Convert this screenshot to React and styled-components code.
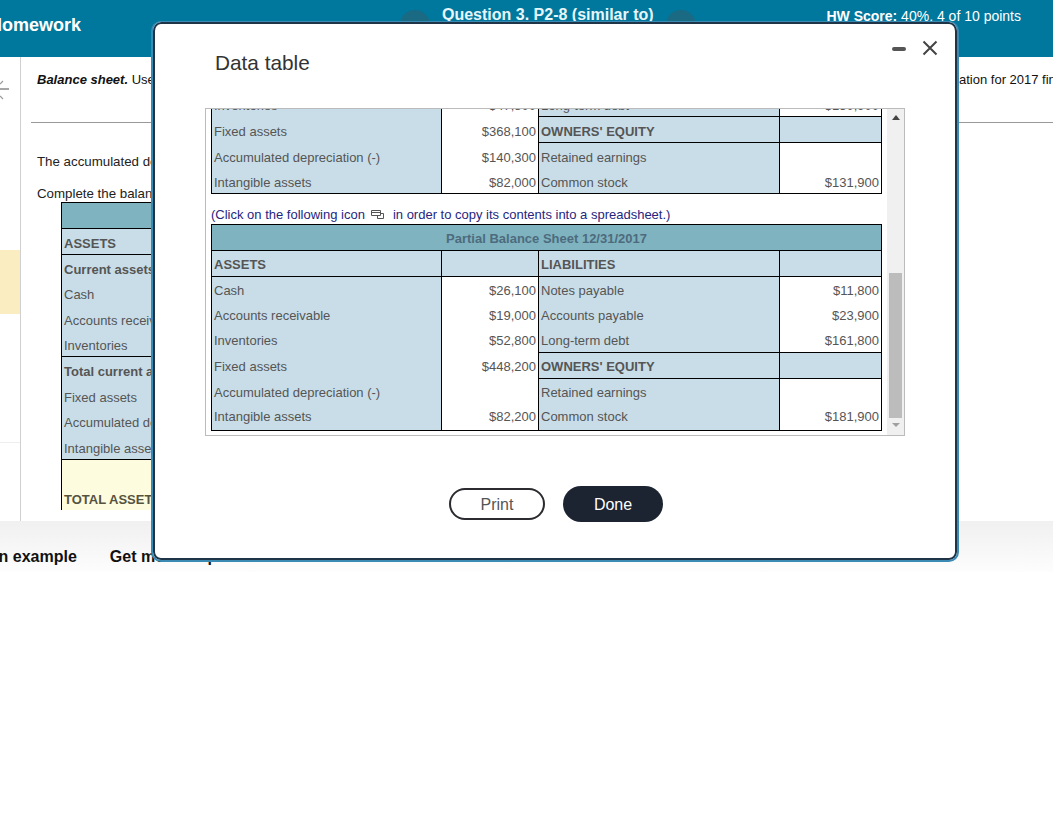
import React from "react";
import styled, { createGlobalStyle } from "styled-components";

const balance2016 = [
  { left: "Fixed assets", amount: "$368,100", right: "OWNERS' EQUITY", value: "", equity: true, h: 26 },
  { left: "Accumulated depreciation (-)", amount: "$140,300", right: "Retained earnings", value: "", h: 25 },
  { left: "Intangible assets", amount: "$82,000", right: "Common stock", value: "$131,900", h: 26 },
];

const balance2017 = [
  { left: "Cash", amount: "$26,100", right: "Notes payable", value: "$11,800", h: 25 },
  { left: "Accounts receivable", amount: "$19,000", right: "Accounts payable", value: "$23,900", h: 25 },
  { left: "Inventories", amount: "$52,800", right: "Long-term debt", value: "$161,800", h: 26 },
  { left: "Fixed assets", amount: "$448,200", right: "OWNERS' EQUITY", value: "", equity: true, h: 26 },
  { left: "Accumulated depreciation (-)", amount: "", right: "Retained earnings", value: "", h: 25 },
  { left: "Intangible assets", amount: "$82,200", right: "Common stock", value: "$181,900", h: 27 },
];

const worksheet = [
  { label: "ASSETS", bold: true, ruled: true, h: 26 },
  { label: "Current assets", bold: true, h: 25 },
  { label: "Cash", h: 26 },
  { label: "Accounts receivable", h: 25 },
  { label: "Inventories", ruled: true, h: 26 },
  { label: "Total current assets", bold: true, h: 26 },
  { label: "Fixed assets", h: 25 },
  { label: "Accumulated depreciation (-)", h: 26 },
  { label: "Intangible assets", ruled: true, h: 26 },
];

export default function App() {
  return (
    <Page>
      <GlobalStyle />
      <Header>
        <Brand>Homework</Brand>
        <QuestionNav>
          <NavCircle />
          <QuestionTitle>Question 3. P2-8 (similar to)</QuestionTitle>
          <NavCircle />
        </QuestionNav>
        <Score>
          <b>HW Score:</b> 40%, 4 of 10 points
        </Score>
      </Header>

      <Body>
        <Sidebar>
          <CollapseIcon width="9" height="22" viewBox="0 0 9 22">
            <path d="M0 10h9" stroke="#888" strokeWidth="1.5" />
            <path d="M3 2 0 5M3 20l-3-3" stroke="#999" strokeWidth="1.2" fill="none" />
          </CollapseIcon>
          <SideHighlight />
          <SideRule />
        </Sidebar>
        <Main>
          <Statement>
            <span>
              <i>Balance sheet.</i> Use the data table
            </span>
            <StatementEnd>ation for 2017 financial</StatementEnd>
          </Statement>
          <Rule />
          <Paragraph $top={31}>The accumulated depreciation for 2017</Paragraph>
          <Paragraph $top={16}>Complete the balance sheet</Paragraph>
          <WorksheetTable>
            <tbody>
              <tr>
                <HeadCell style={{ height: 26 }} />
              </tr>
              {worksheet.map((row) => (
                <tr key={row.label}>
                  <Cell $fill="blue" $bold={row.bold} $ruled={row.ruled} style={{ height: row.h }}>
                    {row.label}
                  </Cell>
                </tr>
              ))}
              <tr>
                <TotalCell>TOTAL ASSETS</TotalCell>
              </tr>
            </tbody>
          </WorksheetTable>
        </Main>
      </Body>

      <Footer>
        <FooterLink $offset={-51}>View an example</FooterLink>
        <FooterLink>Get more help</FooterLink>
      </Footer>

      <Modal>
        <ModalHeader>
          <ModalTitle>Data table</ModalTitle>
          <MinimizeBar />
          <CloseIcon width="16" height="16" viewBox="0 0 16 16">
            <path d="M1.5 1.5l13 13M14.5 1.5l-13 13" stroke="#444" strokeWidth="2" />
          </CloseIcon>
        </ModalHeader>

        <ScrollBox>
          <ScrollContent>
            <ScrollInner>
              <DataTable $shift={5}>
                <Columns />
                <tbody>
                  <tr>
                    <Cell $fill="blue" style={{ height: 26 }}>Inventories</Cell>
                    <Cell $align="right">$47,800</Cell>
                    <Cell $fill="blue">Long-term debt</Cell>
                    <Cell $align="right">$130,900</Cell>
                  </tr>
                  {renderRows(balance2016)}
                </tbody>
              </DataTable>
              <Note>
                (Click on the following icon
                <CopyIcon width="14" height="9" viewBox="0 0 14 9">
                  <path d="M.5.5h9v5h-9zM.5 2.5h9" fill="none" stroke="#555" />
                  <path d="M9.5 3.5h3v5h-6v-3" fill="none" stroke="#555" />
                </CopyIcon>
                in order to copy its contents into a spreadsheet.)
              </Note>
              <DataTable $shift={3} $tail={2}>
                <Columns />
                <tbody>
                  <tr>
                    <HeadCell colSpan={4} style={{ height: 26 }}>Partial Balance Sheet 12/31/2017</HeadCell>
                  </tr>
                  <tr>
                    <Cell $fill="blue" $bold $ruled style={{ height: 26 }}>ASSETS</Cell>
                    <Cell $fill="blue" $ruled />
                    <Cell $fill="blue" $bold $ruled>LIABILITIES</Cell>
                    <Cell $fill="blue" $ruled />
                  </tr>
                  {renderRows(balance2017)}
                </tbody>
              </DataTable>
            </ScrollInner>
          </ScrollContent>
          <Scrollbar>
            <ArrowUp />
            <Thumb />
            <ArrowDown />
          </Scrollbar>
        </ScrollBox>

        <Actions>
          <PrintButton>Print</PrintButton>
          <DoneButton>Done</DoneButton>
        </Actions>
      </Modal>
    </Page>
  );
}

function Columns() {
  return (
    <colgroup>
      <col width="230" />
      <col width="97" />
      <col width="241" />
      <col width="102" />
    </colgroup>
  );
}

function renderRows(rows) {
  return rows.map((row) => (
    <tr key={row.left}>
      <Cell $fill="blue" style={{ height: row.h }}>{row.left}</Cell>
      <Cell $align="right">{row.amount}</Cell>
      <Cell $fill="blue" $bold={row.equity} $ruled={row.equity} $ruledTop={row.equity}>
        {row.right}
      </Cell>
      <Cell
        $align="right"
        $fill={row.equity ? "blue" : undefined}
        $ruled={row.equity}
        $ruledTop={row.equity}
      >
        {row.value}
      </Cell>
    </tr>
  ));
}

const GlobalStyle = createGlobalStyle`
  html, body {
    margin: 0;
    padding: 0;
    overflow: hidden;
    background: #fff;
    font-family: "Liberation Sans", Arial, sans-serif;
  }
`;

const Page = styled.div`
  position: relative;
  width: 100%;
  height: 829px;
  overflow: hidden;
`;

const Header = styled.header`
  display: flex;
  height: 57px;
  background: #00789d;
  color: #fff;
`;

const Brand = styled.div`
  width: 411px;
  margin-left: -11px;
  padding-top: 15px;
  font-size: 18px;
  line-height: 21px;
  font-weight: bold;
`;

const QuestionNav = styled.div`
  display: flex;
  gap: 12px;
  align-items: flex-start;
`;

const NavCircle = styled.div`
  width: 30px;
  height: 30px;
  margin-top: 10px;
  border-radius: 50%;
  background: #1a6a84;
`;

const QuestionTitle = styled.div`
  padding-top: 6px;
  font-size: 16px;
  line-height: 18px;
  font-weight: bold;
  color: #e6f6fb;
`;

const Score = styled.div`
  margin-left: auto;
  padding: 8px 32px 0 0;
  font-size: 14px;
  line-height: 16px;
`;

const Body = styled.div`
  display: flex;
  height: 464px;
`;

const Sidebar = styled.aside`
  display: flex;
  flex-direction: column;
  width: 20px;
  flex-shrink: 0;
  border-right: 1px solid #d0d0d0;
`;

const CollapseIcon = styled.svg`
  display: block;
  margin-top: 22px;
`;

const SideHighlight = styled.div`
  height: 64px;
  margin-top: 149px;
  background: #faedc1;
`;

const SideRule = styled.div`
  height: 1px;
  margin-top: 128px;
  background: #eee;
`;

const Main = styled.main`
  flex: 1;
  min-width: 0;
  overflow: hidden;
  color: #222;
`;

const Statement = styled.div`
  display: flex;
  justify-content: space-between;
  margin: 15px 0 0 16px;
  font-size: 13px;
  line-height: 16px;
  color: #111;

  i {
    font-weight: bold;
  }
`;

const StatementEnd = styled.span`
  width: 94px;
  overflow: hidden;
  white-space: nowrap;
`;

const Rule = styled.hr`
  height: 1px;
  margin: 34px 0 0 10px;
  border: 0;
  background: #999;
`;

const Paragraph = styled.p`
  margin: ${(p) => p.$top}px 0 0 16px;
  line-height: 16px;
  font-size: 13.3px;
`;

const cellColors = {
  blue: "#c8dde8",
  white: "#fff",
};

const Cell = styled.td`
  box-sizing: border-box;
  padding: 0 2px;
  border-left: 1px solid #000;
  border-right: 1px solid #000;
  border-bottom: ${(p) => (p.$ruled ? "1px solid #000" : "0")};
  border-top: ${(p) => (p.$ruledTop ? "1px solid #000" : "0")};
  background: ${(p) => cellColors[p.$fill] || cellColors.white};
  color: #555;
  font-size: 13px;
  line-height: 15px;
  font-weight: ${(p) => (p.$bold ? "bold" : "normal")};
  text-align: ${(p) => p.$align || "left"};
  white-space: nowrap;
  overflow: hidden;
`;

const HeadCell = styled.td`
  box-sizing: border-box;
  padding: 0;
  border: 1px solid #000;
  background: #7fb3c0;
  color: #4d6b7d;
  font-size: 13px;
  font-weight: bold;
  text-align: center;
`;

const TotalCell = styled(Cell)`
  && {
    height: 50px;
    padding: 0 2px 3px;
  }
  vertical-align: bottom;
  background: #fefcdf;
  color: #55533f;
  font-weight: bold;
`;

const WorksheetTable = styled.table`
  width: 300px;
  margin: 0 0 0 40px;
  border-collapse: collapse;
  table-layout: fixed;

  td {
    padding-top: 4px;
  }
`;

const DataTable = styled.table`
  width: 670px;
  border-collapse: collapse;
  table-layout: fixed;
  border-bottom: 1px solid #000;

  td {
    padding-top: ${(p) => p.$shift}px;
  }

  tr:last-child td {
    padding-bottom: ${(p) => p.$tail || 0}px;
  }
`;

const Footer = styled.footer`
  display: flex;
  gap: 33px;
  height: 51px;
  background: linear-gradient(#f0f0f0, #fdfdfd);
`;

const FooterLink = styled.span`
  margin-left: ${(p) => p.$offset || 0}px;
  padding-top: 27px;
  font-size: 16px;
  line-height: 18px;
  font-weight: bold;
  color: #111;
  white-space: nowrap;
`;

const Modal = styled.div`
  position: absolute;
  top: 21px;
  left: 151px;
  box-sizing: border-box;
  width: 808px;
  height: 541px;
  padding: 2px 52px 0;
  background: #fff;
  border: 2px solid #3a8ab4;
  border-top-width: 1px;
  border-radius: 10px;
  box-shadow: inset 0 0 0 2px #1f3547;
`;

const ModalHeader = styled.div`
  display: flex;
  align-items: flex-start;
  height: 84px;
  padding-left: 10px;
`;

const ModalTitle = styled.h2`
  margin: 27px auto 0 0;
  font-size: 20.8px;
  line-height: 23px;
  font-weight: normal;
  color: #333;
`;

const MinimizeBar = styled.span`
  width: 14px;
  height: 4px;
  margin: 23px 16px 0 0;
  border-radius: 2px;
  background: #555;
`;

const CloseIcon = styled.svg`
  margin: 16px -33px 0 0;
`;

const ScrollBox = styled.div`
  display: flex;
  height: 328px;
  box-sizing: border-box;
  border: 1px solid #bbb;
`;

const ScrollContent = styled.div`
  flex: 1;
  min-width: 0;
  padding: 0 5px;
  overflow: hidden;
`;

const ScrollInner = styled.div`
  margin-top: -19px;
`;

const Note = styled.div`
  display: flex;
  align-items: flex-end;
  height: 30px;
  padding-bottom: 2px;
  box-sizing: border-box;
  color: #262680;
  font-size: 13px;
  line-height: 15px;
  white-space: nowrap;
`;

const CopyIcon = styled.svg`
  margin: 0 8px 3px 6px;
`;

const Scrollbar = styled.div`
  display: flex;
  flex-direction: column;
  align-items: center;
  width: 17px;
  background: #f0f0f0;
`;

const ArrowUp = styled.span`
  margin-top: 6px;
  border: 4px solid transparent;
  border-top: 0;
  border-bottom: 5px solid #444;
`;

const Thumb = styled.div`
  width: 13px;
  height: 145px;
  margin-top: 153px;
  background: #bcbcbc;
`;

const ArrowDown = styled.span`
  margin-top: 5px;
  border: 4px solid transparent;
  border-bottom: 0;
  border-top: 4px solid #a0a0a0;
`;

const Actions = styled.div`
  display: flex;
  align-items: center;
  justify-content: center;
  gap: 18px;
  margin: 50px 0 0 2px;
`;

const PrintButton = styled.button`
  width: 96px;
  height: 32px;
  padding: 1px 0 0;
  background: #fff;
  border: 2px solid #2b2b30;
  border-radius: 16px;
  color: #555;
  font: 16px "Liberation Sans", Arial, sans-serif;
`;

const DoneButton = styled.button`
  width: 100px;
  height: 36px;
  padding: 1px 0 0;
  background: #1c2431;
  border: 0;
  border-radius: 18px;
  color: #fff;
  font: 16px "Liberation Sans", Arial, sans-serif;
`;
